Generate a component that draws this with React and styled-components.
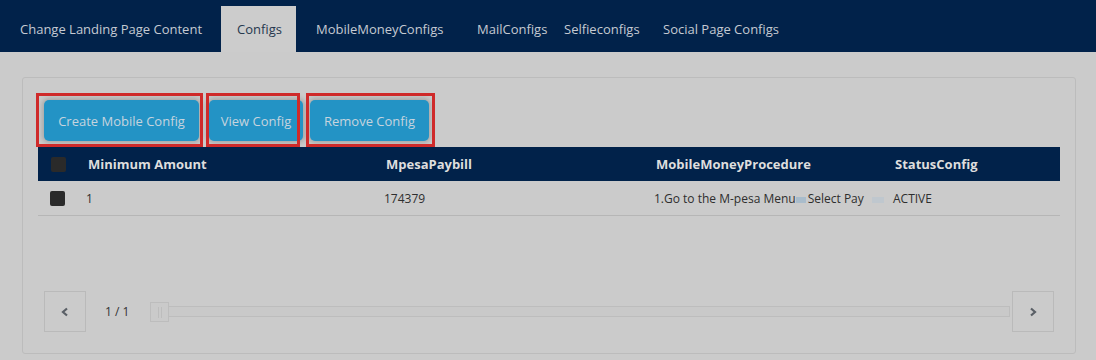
import styled, { createGlobalStyle } from "styled-components";

const GlobalStyle = createGlobalStyle`
  html, body {
    margin: 0;
    padding: 0;
    background: #cbcbcb;
    font-family: "Open Sans", "Liberation Sans", sans-serif;
  }
`;

const Page = styled.div`
  width: 1096px;
  height: 360px;
  background: #cbcbcb;
  overflow: hidden;
`;

const Nav = styled.nav`
  height: 52px;
  background: #01224a;
  display: flex;
  align-items: flex-end;
  padding-left: 4px;
  box-sizing: border-box;
`;

const Tab = styled.div`
  width: ${(p) => p.$w || "auto"};
  height: 46px;
  box-sizing: border-box;
  padding-left: 16px;
  margin-right: ${(p) => p.$mr || "0px"};
  display: flex;
  align-items: center;
  font-size: 13px;
  white-space: nowrap;
  color: ${(p) => (p.$active ? "#26384f" : "#c5cad2")};
  background: ${(p) => (p.$active ? "#cccccc" : "transparent")};
`;

const Panel = styled.section`
  margin: 25px 20px 0 22px;
  height: 277px;
  box-sizing: border-box;
  border: 1px solid #bcbcbc;
  border-radius: 3px;
  padding: 22px 15px 0 15px;
  display: flex;
  flex-direction: column;
`;

const Toolbar = styled.div`
  display: flex;
  margin-left: 6px;
  height: 41px;
`;

const Button = styled.button`
  position: relative;
  width: ${(p) => p.$w};
  margin-right: ${(p) => p.$mr || "0px"};
  height: 41px;
  border: 0;
  border-radius: 5px;
  background: #2393c5;
  color: #c6d4de;
  font-family: "Open Sans", "Liberation Sans", sans-serif;
  font-size: 13px;
  padding: 0;
  box-shadow: 0 0 5px 2px rgba(0, 0, 0, 0.18);
  cursor: pointer;
`;

const Outline = styled.span`
  position: absolute;
  top: -7px;
  bottom: -6px;
  left: ${(p) => p.$l};
  right: ${(p) => p.$r};
  border: 3px solid #cf2a2a;
  pointer-events: none;
`;

const Table = styled.div`
  margin-top: 6px;
  display: flex;
  flex-direction: column;
`;

const cols = "50px 297px 271px 239px 1fr";

const HeadRow = styled.div`
  display: grid;
  grid-template-columns: ${cols};
  align-items: center;
  height: 34px;
  background: #01224a;
  color: #dedede;
  font-weight: 700;
  font-size: 13px;
`;

const BodyRow = styled.div`
  display: grid;
  grid-template-columns: ${cols};
  align-items: center;
  height: 34px;
  border-bottom: 1px solid #b6b6b6;
  color: #2e2e2e;
  font-size: 12px;
`;

const Cell = styled.div`
  margin-left: ${(p) => p.$ml || "0px"};
  white-space: nowrap;
  display: flex;
  align-items: center;
`;

const Check = styled.span`
  display: block;
  width: 15px;
  height: 15px;
  margin-left: ${(p) => p.$ml || "13px"};
  background: #2a2a2a;
  border-radius: 2px;
`;

const Blur = styled.span`
  display: inline-block;
  width: ${(p) => p.$w};
  height: 6px;
  margin: 3px ${(p) => p.$mr || "0px"} 0 ${(p) => p.$ml || "0px"};
  background: ${(p) => p.$c || "#a9bccb"};
`;

const Pager = styled.div`
  margin-top: 75px;
  padding: 0 6px;
  display: flex;
  align-items: center;
  height: 41px;
`;

const PageBtn = styled.div`
  width: 42px;
  height: 41px;
  box-sizing: border-box;
  border: 1px solid #bababa;
  display: flex;
  align-items: center;
  justify-content: center;
  flex-shrink: 0;
`;

const PageInfo = styled.span`
  width: 45px;
  padding-left: 19px;
  font-size: 12px;
  color: #333;
`;

const Track = styled.div`
  position: relative;
  flex: 1;
  height: 11px;
  margin-right: 2px;
  box-sizing: border-box;
  border: 1px solid #bdbdbd;
  background: #c9c9c9;
`;

const Handle = styled.div`
  position: absolute;
  left: -1px;
  top: -5px;
  width: 19px;
  height: 20px;
  box-sizing: border-box;
  border: 1px solid #bdbdbd;
  background: #cacaca;
  display: flex;
  justify-content: center;
  align-items: center;
  gap: 2px;
`;

const Grip = styled.span`
  width: 1px;
  height: 11px;
  background: #bdbdbd;
`;

const Chevron = ({ dir }) => (
  <svg width="8" height="10" viewBox="0 0 8 10">
    <polyline
      points={dir === "left" ? "6,1.5 2,5 6,8.5" : "2,1.5 6,5 2,8.5"}
      fill="none"
      stroke="#5a5f66"
      strokeWidth="2.2"
    />
  </svg>
);

const tabs = [
  { label: "Change Landing Page Content", w: "217px" },
  { label: "Configs", w: "75px", mr: "4px", active: true },
  { label: "MobileMoneyConfigs", w: "161px" },
  { label: "MailConfigs", w: "87px" },
  { label: "Selfieconfigs", w: "99px" },
  { label: "Social Page Configs" },
];

export default function App() {
  return (
    <Page>
      <GlobalStyle />
      <Nav>
        {tabs.map((t) => (
          <Tab key={t.label} $w={t.w} $mr={t.mr} $active={t.active}>
            {t.label}
          </Tab>
        ))}
      </Nav>

      <Panel>
        <Toolbar>
          <Button $w="155px" $mr="10px">
            Create Mobile Config
            <Outline $l="-8px" $r="-4px" />
          </Button>
          <Button $w="94px" $mr="7px">
            View Config
            <Outline $l="-3px" $r="3px" />
          </Button>
          <Button $w="119px">
            Remove Config
            <Outline $l="-4px" $r="-6px" />
          </Button>
        </Toolbar>

        <Table>
          <HeadRow>
            <Cell>
              <Check />
            </Cell>
            <Cell>Minimum Amount</Cell>
            <Cell $ml="1px">MpesaPaybill</Cell>
            <Cell>MobileMoneyProcedure</Cell>
            <Cell>StatusConfig</Cell>
          </HeadRow>
          <BodyRow>
            <Cell>
              <Check $ml="12px" />
            </Cell>
            <Cell $ml="-2px">1</Cell>
            <Cell $ml="-1px">174379</Cell>
            <Cell $ml="-2px">
              1.Go to the M-pesa Menu
              <Blur $w="10px" $mr="2px" />
              Select Pay
              <Blur $w="12px" $ml="8px" $c="#bfc7ce" />
            </Cell>
            <Cell $ml="-2px">ACTIVE</Cell>
          </BodyRow>
        </Table>

        <Pager>
          <PageBtn>
            <Chevron dir="left" />
          </PageBtn>
          <PageInfo>1 / 1</PageInfo>
          <Track>
            <Handle>
              <Grip />
              <Grip />
            </Handle>
          </Track>
          <PageBtn>
            <Chevron dir="right" />
          </PageBtn>
        </Pager>
      </Panel>
    </Page>
  );
}
